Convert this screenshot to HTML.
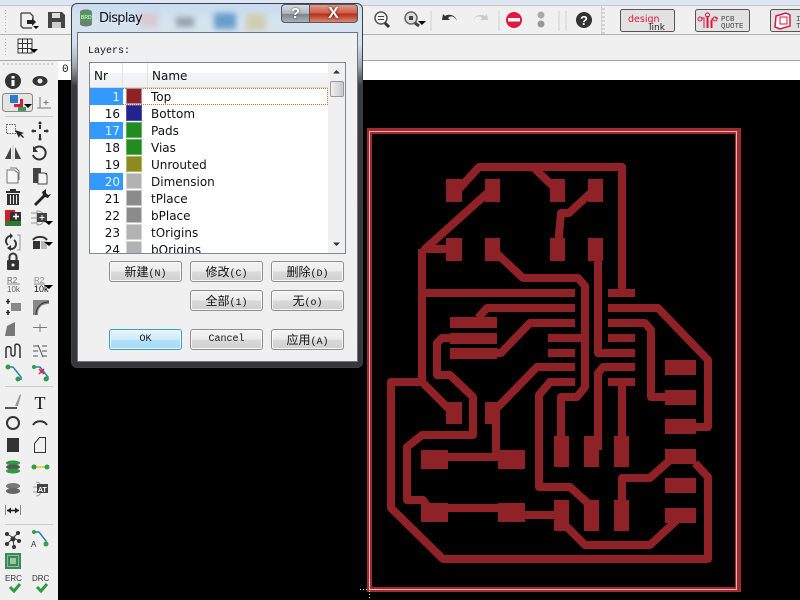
<!DOCTYPE html>
<html><head><meta charset="utf-8"><style>
html,body{margin:0;padding:0;width:800px;height:600px;overflow:hidden;background:#000;font-family:"DejaVu Sans","Liberation Sans",sans-serif}
.a{position:absolute}
.row{position:absolute;left:0;width:239px;height:17px;font-size:12px;line-height:19px;color:#10101e}
.row .n{position:absolute;left:0;width:33px;height:17px;text-align:right;box-sizing:border-box;padding-right:3px}
.row .n.s{background:#3399ff;color:#e8f2ff}
.row .c{position:absolute;left:36px;top:0;width:16px;height:16px;box-sizing:border-box;border:1px solid #ccc}
.row .t{position:absolute;left:61px}
.btn{position:absolute;width:73px;height:21px;box-sizing:border-box;border:1px solid #8e8e8e;border-radius:3px;background:linear-gradient(#f3f3f3 0,#ececec 48%,#dadada 52%,#cfcfcf 100%);text-align:center;font:10px/20px "Liberation Mono","Noto Sans CJK SC",monospace;color:#111;box-shadow:inset 0 0 0 1px #f8f8f8}
.btn b{font:400 12px/19px "Noto Sans CJK SC",sans-serif}
</style></head><body>
<div class="a" style="left:0;top:0;width:800px;height:5px;background:#dfe6f3"></div>
<div class="a" style="left:0;top:5px;width:800px;height:29px;background:#f0f0f0;border-top:1px solid #c8c8c8;box-sizing:border-box"></div>
<div class="a" style="left:0;top:34px;width:800px;height:1px;background:#b4b4b4"></div>
<div class="a" style="left:0;top:35px;width:800px;height:25px;background:#f0f0f0"></div>
<div class="a" style="left:0;top:60px;width:800px;height:1px;background:#a8a8a8"></div>
<div class="a" style="left:0;top:61px;width:58px;height:539px;background:#f0f0f0"></div>
<div class="a" style="left:58px;top:61px;width:742px;height:19px;background:#fff"></div>
<div class="a" style="left:62px;top:63px;font:11px/14px 'Liberation Mono',monospace;color:#111">0</div>

<svg class="a" style="left:0;top:0" width="800" height="600" viewBox="0 0 800 600">
<!-- board -->
<g fill="none" stroke="#8f2226" stroke-width="8" stroke-linejoin="round">
<path d="M458 190L479 167H622V293"/><path d="M533 167L557 190"/>
<path d="M596 188L569 213H561L558 245"/>
<path d="M493 188L425 249H450M422 249V382H391V508L443 559H708V477L695 463"/>
<path d="M422 293H575"/>
<path d="M493 250L523 278H578L585 286V387L577 397H561V440"/>
<path d="M575 308H487L478 318"/>
<path d="M575 323H530L501 353H490"/>
<path d="M460 338H442L437 343V375H450L473 397V435H422L407 447V500H423L430 510"/>
<path d="M422 382L453 413"/>
<path d="M598 245V353H635"/>
<path d="M608 308H658L708 360V427H690"/>
<path d="M608 323H645L651 330V397H670"/>
<path d="M493 412L537 367H575"/>
<path d="M496 410V457"/><path d="M448 457H498" />
<path d="M448 508H498"/><path d="M525 515H556"/>
<path d="M575 382H550L539 395V487H570L592 507"/>
<path d="M635 367H603L598 373V450"/>
<path d="M622 382V440"/>
<path d="M622 505V478H650L670 460H690"/>
<path d="M565 525L585 545H650L677 520"/>
<path d="M560 338H585"/>
</g>
<g fill="#8f2226">
<path d="M446 179h16v23h-16zM485 179h15v23h-15zM550 179h15v23h-15zM588 179h15v23h-15zM446 238h16v23h-16zM485 238h15v23h-15zM550 238h15v23h-15zM588 238h15v23h-15zM446 402h16v22h-16zM485 402h15v22h-15z"/>
<path d="M450 317h47v11h-47zM450 333h47v11h-47zM450 348h47v11h-47z"/>
<path d="M548 289h27v8h-27zM548 304h27v8h-27zM548 319h27v8h-27zM548 334h27v8h-27zM548 349h27v8h-27zM548 363h27v8h-27zM548 378h27v8h-27z"/>
<path d="M608 289h27v8h-27zM608 304h27v8h-27zM608 319h27v8h-27zM608 334h27v8h-27zM608 349h27v8h-27zM608 363h27v8h-27zM608 378h27v8h-27z"/>
<path d="M665 360h31v15h-31zM665 390h31v15h-31zM665 419h31v15h-31zM665 449h31v15h-31zM665 478h31v15h-31zM665 508h31v15h-31z"/>
<path d="M421 450h27v19h-27zM498 450h27v19h-27zM421 503h27v19h-27zM498 503h27v19h-27z"/>
<path d="M554 436h15v31h-15zM584 436h15v31h-15zM614 436h15v31h-15zM554 500h15v31h-15zM584 500h15v31h-15zM614 500h15v31h-15z"/>
</g>
<path d="M367 128H741V592H367Z M372 134V587H735V134Z" fill="#a32a2e" fill-rule="evenodd"/>
<rect x="369.5" y="131.5" width="367" height="458" fill="none" stroke="#e3b4b4"/>
<path d="M360 589.5h20M369.5 579v21" stroke="#fff" stroke-dasharray="1 2" fill="none"/>

<!-- top toolbar -->
<g fill="none" stroke="#444" stroke-width="1.5">
<path d="M21 13h9l3 3v3M21 13v13l2 2h9" stroke="#555"/><path d="M27 20h5v-2l4 4-4 4v-2h-5z" fill="#222" stroke="none"/><path d="M33 26h6l-3 3z" fill="#000" stroke="none"/>
</g>
<path d="M48 12h14l3 3v13H48z" fill="#444"/><rect x="52" y="13" width="8" height="5" fill="#ddd"/><rect x="52" y="22" width="9" height="6" fill="#ccc"/>
<g stroke="#888" fill="#777"><path d="M18 39h14v14H18z" fill="none" stroke="#333"/><path d="M18 43.5h14M18 48.5h14M22.5 39v14M27.5 39v14" fill="none" stroke="#333"/></g><path d="M30 49h8l-4 4z" fill="#000"/>
<g fill="none" stroke="#b5b5b5"><path d="M5.5 10v22M5.5 39v16" stroke-dasharray="1 2"/><path d="M3 64h50" stroke-dasharray="2 2"/><path d="M602 8v26M604 8v26" stroke-dasharray="2 2" /></g>
<path d="M431 11v20M499 11v20M559 11v20M566 11v20M601.500 6v28" stroke="#cfcfcf" fill="none"/>
<circle cx="381" cy="18" r="6" fill="#f4f4f4" stroke="#555" stroke-width="1.5"/><path d="M378 16.500h6M378 19.500h6" stroke="#444"/><path d="M385 23l4 4" stroke="#333" stroke-width="3"/>
<circle cx="411" cy="18" r="6" fill="#ddd" stroke="#666" stroke-width="1.500"/><rect x="409" y="16" width="4" height="4" fill="#444"/><path d="M415 23l4 3" stroke="#444" stroke-width="3"/><path d="M418 21h8l-4 4z" fill="#000"/>
<path d="M457 21c-2-5-7-6-9-3l2 2h-8l1-6 2 2c5-3 11 0 12 5z" fill="#333"/>
<path d="M473 21c2-5 7-6 9-3l-2 2h8l-1-6-2 2c-5-3-11 0-12 5z" fill="#ccc"/>
<circle cx="514" cy="20" r="8" fill="#e3173e"/><rect x="508" y="18" width="12" height="3.500" fill="#fff"/>
<circle cx="541" cy="15" r="3.500" fill="#aaa"/><circle cx="541" cy="24" r="3.500" fill="#999"/>
<circle cx="584" cy="20" r="8" fill="#333"/><text x="584" y="25" font-family="Liberation Sans" font-weight="700" font-size="13" fill="#fff" text-anchor="middle">?</text>
<g fill="#e2e2e2" stroke="#555"><rect x="620.500" y="9.500" width="54" height="22" rx="2"/><rect x="695.500" y="9.500" width="54" height="22" rx="2"/><rect x="770.500" y="9.500" width="40" height="22" rx="2"/></g>
<text x="628" y="22" font-family="DejaVu Sans" font-size="9.500" fill="#d9173f">design</text><text x="649" y="30" font-family="DejaVu Sans" font-size="9" fill="#222">link</text>
<path d="M701 18h3v10M708 16v12M712 18v10M715 18h3M704 28V18M707 28V16M711 28V20" stroke="#d9173f" fill="none"/><circle cx="707.500" cy="15" r="2" fill="none" stroke="#d9173f"/><circle cx="700" cy="19" r="2" fill="none" stroke="#d9173f"/><circle cx="715" cy="19" r="2" fill="none" stroke="#d9173f"/>
<text x="721" y="21" font-family="Liberation Mono" font-size="7.500" fill="#444">PCB</text><text x="721" y="28" font-family="Liberation Mono" font-size="7.500" fill="#444">QUOTE</text>
<path d="M776 16l10-3 4 2v11l-10 3-5-2z" fill="#fff" stroke="#d9173f" stroke-width="1.500"/><path d="M780 17h7v7h-7z" fill="none" stroke="#d9173f"/>
<text x="796" y="21" font-family="Liberation Mono" font-size="7.500" fill="#444">ID</text><text x="796" y="28" font-family="Liberation Mono" font-size="7.500" fill="#444">T</text>

<!-- left toolbar -->
<path d="M5 116.500h48M5 386.500h48M5 524.500h48" stroke="#ccc"/>
<circle cx="13" cy="81" r="8" fill="#333"/><rect x="11.500" y="80" width="3" height="6" fill="#fff"/><rect x="11.500" y="76" width="3" height="2.500" fill="#fff"/>
<ellipse cx="40" cy="81" rx="7.500" ry="5" fill="#333"/><circle cx="40" cy="81" r="2.500" fill="#eee"/>
<rect x="2.500" y="93.500" width="30" height="18" rx="3" fill="#e4e4e4" stroke="#888"/>
<rect x="10" y="95" width="8" height="8" fill="#2b7cc7"/><path d="M20 99v5h-6v3h9v-8z" fill="#d9173f"/><rect x="18" y="107" width="8" height="4" fill="#3a9a5a"/><path d="M24 104h8l-4 4z" fill="#000"/>
<path d="M40 97v11M37 108h14M46 100v5M43.500 102.500h5" stroke="#777" fill="none"/>
<rect x="6.500" y="124.500" width="9" height="9" fill="none" stroke="#666" stroke-dasharray="1.500 1"/><path d="M15 130l4 8 1-3 3 3 1-1-3-3 3-1z" fill="#222"/>
<path d="M40 125v4M40 134v4M33 131h3M44 131h3" stroke="#333" stroke-width="2"/><circle cx="40" cy="123" r="1.500" fill="#333"/><circle cx="40" cy="139" r="1.500" fill="#333"/><circle cx="33" cy="131" r="1.500" fill="#333"/><circle cx="47" cy="131" r="1.500" fill="#333"/>
<path d="M11 147v12H5zM15 147v12h6z" fill="#444"/><path d="M13 145v16" stroke="#ccc"/>
<path d="M34 149a6.500 6.500 0 1 1-1 6" fill="none" stroke="#333" stroke-width="2"/><path d="M33 146v6h5z" fill="#333"/>
<path d="M7 170h7l4 3v10H7z" fill="#f6f6f6" stroke="#777"/><path d="M10 168h6l3 3v9" fill="none" stroke="#777"/>
<path d="M33 168h8v5h6v10H33z" fill="#444"/><path d="M38 173h7l2 2v9h-9z" fill="#f4f4f4" stroke="#444"/>
<path d="M6 191h14v2H6zM10 189h6v2h-6zM7 194h12v11H7z" fill="#333"/><path d="M10.500 195v9M13.500 195v9M16.500 195v9" stroke="#eee"/>
<path d="M46 189l-4 3 1 3-9 9 2 2 9-9 3 1 3-4-3 1-2-2z" fill="#222"/>
<rect x="5" y="210" width="10" height="11" fill="#cf1f2b"/><rect x="10" y="212" width="11" height="9" fill="#333"/><rect x="5" y="221" width="16" height="5" fill="#2a7a30"/><path d="M13 216.500h6M16 213.500v6" stroke="#fff" stroke-width="1.500"/>
<path d="M31 213h6M31 218h6M31 223h6M37 211c5 0 7 3 7 7s-2 7-7 7z" fill="none" stroke="#999"/><rect x="37" y="213" width="10" height="9" fill="#444"/><path d="M42 215v5M39.500 217.500h5" stroke="#fff"/><path d="M44 221h9l-4 4z" fill="#000"/>
<path d="M11 236a5 5 0 0 0-3 9M11 249a5 5 0 0 0 3-9" fill="none" stroke="#333" stroke-width="2"/><path d="M10 233v6l3-3zM11 245v6l-4-3z" fill="#333"/><path d="M17 235h3v15h-3" fill="none" stroke="#999"/>
<path d="M33 240a8 6 0 0 1 14 0" fill="none" stroke="#333" stroke-width="2"/><rect x="33" y="241" width="7" height="8" fill="#333"/><rect x="41" y="241" width="6" height="8" fill="#bbb"/><path d="M44 242h9l-4 4z" fill="#000"/>
<rect x="7" y="260" width="12" height="10" rx="1" fill="#333"/><path d="M9.500 260v-3a3.500 3.500 0 0 1 7 0v3" fill="none" stroke="#333" stroke-width="2"/><circle cx="13" cy="265" r="1.500" fill="#fff"/>
<g font-family="Liberation Sans" font-size="9" fill="#666"><text x="7" y="283" font-size="8">R2</text><text x="7" y="292" font-size="8">10k</text><text x="34" y="283" font-size="8" fill="#888">R2</text><text x="34" y="292" font-size="9" fill="#111">10k</text></g>
<path d="M7 284h13M34 284h11" stroke="#888"/><path d="M44 285h9l-4 4z" fill="#000"/>
<rect x="11" y="303" width="10" height="8" fill="#888"/><path d="M8 299v5M6 301.500h4M8 310v5M6 312.500h4" stroke="#222" stroke-width="1.500"/>
<path d="M33 300h16v4c-7 0-11 3-11 11h-5z" fill="#888"/><path d="M49 302c-8 0-13 5-13 13" fill="none" stroke="#333"/>
<path d="M7 326l8-4v14H5z" fill="#777"/><path d="M33 327.500h14M40 324v8" stroke="#777"/>
<path d="M6 358v-10a3 3 0 0 1 5 0v6a2 2 0 0 0 4 0v-9a3 3 0 0 1 5 2v11" fill="none" stroke="#333" stroke-width="1.500"/>
<path d="M33 346h5M33 351h5M33 356h5M42 346h5M42 351h5M42 356h5M38 345l5 12" stroke="#555"/>
<path d="M8 367h5l8 10v3" fill="none" stroke="#2b7cc7" stroke-width="1.500"/><circle cx="8" cy="367" r="2.500" fill="#2ea043"/><circle cx="18" cy="379" r="2.500" fill="#2ea043"/>
<path d="M35 367h5l8 10v3" fill="none" stroke="#2b7cc7" stroke-width="1.500"/><circle cx="34" cy="367" r="2" fill="#2ea043"/><circle cx="46" cy="379" r="2.500" fill="#2ea043"/><path d="M39 369l5 5M44 369l-5 5" stroke="#e3173e" stroke-width="1.500"/>
<path d="M5 408h12" stroke="#222" stroke-width="1.500"/><path d="M15 406l5-12 1 1-3 11z" fill="#999"/>
<text x="40" y="409" font-family="Liberation Serif" font-size="18" fill="#111" text-anchor="middle">T</text>
<circle cx="13" cy="423" r="6" fill="none" stroke="#333" stroke-width="2"/>
<path d="M33 425c3-5 11-5 14 0" fill="none" stroke="#333" stroke-width="2"/>
<rect x="7" y="438" width="12" height="14" fill="#333"/><path d="M34.500 452.500v-9l5-6h6v15z" fill="none" stroke="#333"/>
<ellipse cx="13" cy="463" rx="7" ry="2.500" fill="#2e9b3e"/><ellipse cx="13" cy="467" rx="7" ry="2.500" fill="#555"/><ellipse cx="13" cy="471" rx="7" ry="2.500" fill="#2e9b3e"/>
<path d="M34 467h14" stroke="#e6c020" stroke-width="1.500"/><circle cx="34" cy="467" r="2.500" fill="#2ea043"/><circle cx="47" cy="467" r="2.500" fill="#2ea043"/>
<ellipse cx="13" cy="486" rx="7" ry="3" fill="#777"/><ellipse cx="13" cy="491" rx="7" ry="3" fill="#666"/>
<path d="M33 487h4M33 492h4M36 482c4 0 5 3 5 7s-1 7-5 7" fill="none" stroke="#999"/><rect x="37" y="484" width="11" height="9" fill="#444"/><text x="38" y="492" font-family="Liberation Sans" font-size="7" font-weight="700" fill="#fff">AT</text>
<path d="M5.500 505v10M20.500 505v10" stroke="#888"/><path d="M7 510.500h12" stroke="#222" stroke-width="1.500"/><path d="M7 510.500l4-3v6zM19 510.500l-4-3v6z" fill="#222"/>
<g fill="#333"><circle cx="13" cy="539" r="2.500"/><circle cx="7" cy="534" r="2"/><circle cx="18" cy="533" r="2"/><circle cx="7" cy="544" r="2"/><circle cx="19" cy="541" r="2"/><circle cx="14" cy="547" r="2"/></g>
<path d="M7 534l12 7M18 533l-11 11M13 539l1 8" stroke="#333"/>
<path d="M34 532h5l7 9v3" fill="none" stroke="#2b7cc7" stroke-width="1.500"/><circle cx="34" cy="532" r="2" fill="#2ea043"/><circle cx="46" cy="544" r="2.500" fill="#2ea043"/><text x="31" y="547" font-family="Liberation Sans" font-size="8" fill="#333">A</text>
<rect x="5" y="553" width="16" height="16" fill="#3a8a55"/><rect x="7.500" y="555.500" width="11" height="11" fill="none" stroke="#dfeee0" stroke-dasharray="1 1"/><rect x="10" y="558" width="6" height="6" fill="#9cc5a8"/>
<text x="5" y="581" font-family="Liberation Sans" font-size="8" fill="#333">ERC</text><text x="32" y="581" font-family="Liberation Sans" font-size="8" fill="#333">DRC</text>
<path d="M10 587l4 4 6-7" fill="none" stroke="#2e9b3e" stroke-width="3"/><path d="M37 587l4 4 6-7" fill="none" stroke="#2e9b3e" stroke-width="3"/>
</svg>

<!-- dialog -->
<div class="a" style="left:71px;top:3px;width:292px;height:365px;box-sizing:border-box;border:1px solid #3c4048;border-radius:6px;background:linear-gradient(#c5dbef 0,#d8e5f1 20px,#cfe0ee 40px,#9fa7ae 62px,#3a3a3e 82px,#37373a 100%);overflow:hidden">
<div class="a" style="left:68px;top:9px;width:18px;height:14px;background:#d8c8d0;filter:blur(3px)"></div>
<div class="a" style="left:104px;top:13px;width:18px;height:10px;background:#98a2ac;filter:blur(3px)"></div>
<div class="a" style="left:142px;top:9px;width:22px;height:16px;background:#6a9dcc;filter:blur(3px)"></div>
<div class="a" style="left:174px;top:10px;width:20px;height:16px;background:#cfcdb0;filter:blur(3px)"></div>
</div>
<svg class="a" style="left:79px;top:9px" width="15" height="18" viewBox="0 0 15 18"><ellipse cx="7" cy="3" rx="6" ry="2.500" fill="#777"/><rect x="1" y="3" width="12" height="12" fill="#4f9a5a"/><ellipse cx="7" cy="15" rx="6" ry="2.500" fill="#777"/><text x="2" y="10" font-family="Liberation Sans" font-size="5" fill="#fff">BRD</text></svg>
<div class="a" style="left:99px;top:10px;font:13px/17px 'DejaVu Sans',sans-serif;color:#111;letter-spacing:-.7px">Display</div>
<div class="a" style="left:281px;top:4px;width:28px;height:19px;box-sizing:border-box;border:1px solid #555;border-right:0;border-radius:4px 0 0 4px;background:linear-gradient(#d5dde6,#aeb5bd 50%,#7d848c 55%,#aab2bb);color:#fff;text-align:center;font:700 15px/18px 'Liberation Sans',sans-serif;text-shadow:0 0 2px #333">?</div>
<div class="a" style="left:309px;top:4px;width:49px;height:19px;box-sizing:border-box;border:1px solid #555;border-radius:0 4px 4px 0;background:linear-gradient(#e09a88,#d0604c 45%,#b8301c 55%,#d88a72);color:#fff;text-align:center;font:700 16px/17px 'Liberation Sans',sans-serif;text-shadow:0 0 2px #400">X</div>
<div class="a" style="left:77px;top:32px;width:281px;height:330px;box-sizing:border-box;border:1px solid #6d7680;background:#f0f0f0"></div>
<div class="a" style="left:88px;top:44px;font:10px/13px 'Liberation Mono',monospace;color:#111;transform:translateY(1px)">Layers:</div>

<div class="a" style="left:89px;top:62px;width:257px;height:192px;box-sizing:border-box;border:1px solid #828790;background:#fff;overflow:hidden">
 <div class="a" style="left:0;top:0;width:238px;height:24px;background:linear-gradient(#fff 0,#fff 40%,#f4f5f6 42%,#f0f1f2 100%);border-bottom:1px solid #d5d5d5;font-size:12px;line-height:26px;color:#10101e">
  <span class="a" style="left:4px">Nr</span><span class="a" style="left:62px">Name</span>
  <i class="a" style="left:32px;top:0;width:1px;height:24px;background:#e2e3e4"></i><i class="a" style="left:57px;top:0;width:1px;height:24px;background:#e2e3e4"></i>
 </div>
 <div class="a" style="left:0;top:25px;width:238px;height:17px;box-sizing:border-box;border:1px dotted #c9701a;border-radius:1px"></div>
 <div class="row" style="top:25px"><div class="n s">1</div><div class="c" style="background:#8f2226;border-color:#b5888a"></div><div class="t">Top</div></div>
 <div class="row" style="top:42px"><div class="n">16</div><div class="c" style="background:#232390;border-color:#5050b0"></div><div class="t">Bottom</div></div>
 <div class="row" style="top:59px"><div class="n s">17</div><div class="c" style="background:#228b22;border-color:#5fb35f"></div><div class="t">Pads</div></div>
 <div class="row" style="top:76px"><div class="n">18</div><div class="c" style="background:#228b22;border-color:#5fb35f"></div><div class="t">Vias</div></div>
 <div class="row" style="top:93px"><div class="n">19</div><div class="c" style="background:#8b8b22;border-color:#b5b55f"></div><div class="t">Unrouted</div></div>
 <div class="row" style="top:110px"><div class="n s">20</div><div class="c" style="background:#b2b2b2;border-color:#d5d5d5"></div><div class="t">Dimension</div></div>
 <div class="row" style="top:127px"><div class="n">21</div><div class="c" style="background:#8b8b8b;border-color:#c5c5c5"></div><div class="t">tPlace</div></div>
 <div class="row" style="top:144px"><div class="n">22</div><div class="c" style="background:#8b8b8b;border-color:#c5c5c5"></div><div class="t">bPlace</div></div>
 <div class="row" style="top:161px"><div class="n">23</div><div class="c" style="background:#b2b2b2;border-color:#d5d5d5"></div><div class="t">tOrigins</div></div>
 <div class="row" style="top:178px"><div class="n">24</div><div class="c" style="background:#b2b2b2;border-color:#d5d5d5"></div><div class="t">bOrigins</div></div>
 <div class="a" style="left:238px;top:0;width:17px;height:190px;background:#f0f0f0"></div>
 <div class="a" style="left:240px;top:18px;width:14px;height:16px;box-sizing:border-box;border:1px solid #9a9a9a;border-radius:2px;background:linear-gradient(90deg,#f0f0f0,#dcdcdc 50%,#c8c8c8)"></div>
 <svg class="a" style="left:238px;top:0" width="17" height="190"><path d="M5 10.500h7l-3.500-3.500zM5 179.500h7l-3.500 3.500z" fill="#333"/></svg>
</div>

<div class="btn" style="left:109px;top:261px"><b>新建</b>(N)</div>
<div class="btn" style="left:190px;top:261px"><b>修改</b>(C)</div>
<div class="btn" style="left:271px;top:261px"><b>删除</b>(D)</div>
<div class="btn" style="left:190px;top:290px"><b>全部</b>(1)</div>
<div class="btn" style="left:271px;top:290px"><b>无</b>(o)</div>
<div class="btn" style="left:109px;top:329px;border-color:#2f9fd8;background:linear-gradient(#e8f6fd,#cfeafa 50%,#b2dff6 55%,#a8dbf5)">OK</div>
<div class="btn" style="left:190px;top:329px">Cancel</div>
<div class="btn" style="left:271px;top:329px"><b>应用</b>(A)</div>
</body></html>
